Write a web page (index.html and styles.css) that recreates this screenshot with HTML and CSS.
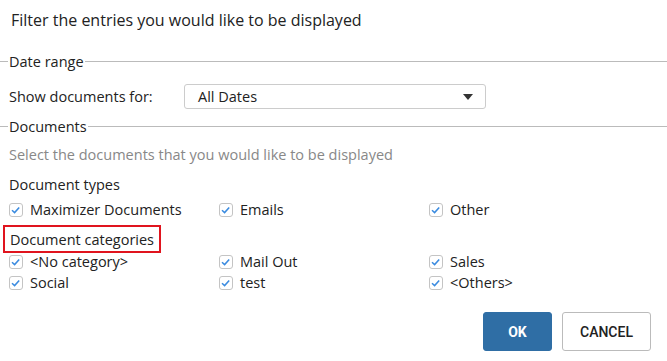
FILE: index.html
```html
<!doctype html>
<html lang="en">
  <head>
    <meta charset="UTF-8" />
    <title>Filter entries</title>
    <link rel="stylesheet" href="styles.css">
  </head>
  <body>
    <div class="dialog">
      <div class="dialog-title">Filter the entries you would like to be displayed</div>

      <div class="section-head"><span class="lead"></span><span class="label">Date range</span><span class="rule"></span></div>
      <div class="date-row">
        <span class="field-label">Show documents for:</span>
        <div class="select">
          <span>All Dates</span>
          <span class="caret"></span>
        </div>
      </div>

      <div class="section-head"><span class="lead"></span><span class="label">Documents</span><span class="rule"></span></div>
      <div class="hint">Select the documents that you would like to be displayed</div>

      <div class="group-title">Document types</div>
      <div class="check-grid">
        <label class="check"><span class="box"><svg viewBox="0 0 12 12"><path d="M2 6.2 L4.6 8.6 L9.2 3.4" /></svg></span>Maximizer Documents</label>
        <label class="check"><span class="box"><svg viewBox="0 0 12 12"><path d="M2 6.2 L4.6 8.6 L9.2 3.4" /></svg></span>Emails</label>
        <label class="check"><span class="box"><svg viewBox="0 0 12 12"><path d="M2 6.2 L4.6 8.6 L9.2 3.4" /></svg></span>Other</label>
      </div>

      <div class="group-title highlight">Document categories</div>
      <div class="check-grid tight">
        <label class="check"><span class="box"><svg viewBox="0 0 12 12"><path d="M2 6.2 L4.6 8.6 L9.2 3.4" /></svg></span>&lt;No category&gt;</label>
        <label class="check"><span class="box"><svg viewBox="0 0 12 12"><path d="M2 6.2 L4.6 8.6 L9.2 3.4" /></svg></span>Mail Out</label>
        <label class="check"><span class="box"><svg viewBox="0 0 12 12"><path d="M2 6.2 L4.6 8.6 L9.2 3.4" /></svg></span>Sales</label>
        <label class="check"><span class="box"><svg viewBox="0 0 12 12"><path d="M2 6.2 L4.6 8.6 L9.2 3.4" /></svg></span>Social</label>
        <label class="check"><span class="box"><svg viewBox="0 0 12 12"><path d="M2 6.2 L4.6 8.6 L9.2 3.4" /></svg></span>test</label>
        <label class="check"><span class="box"><svg viewBox="0 0 12 12"><path d="M2 6.2 L4.6 8.6 L9.2 3.4" /></svg></span>&lt;Others&gt;</label>
      </div>

      <div class="actions">
        <button class="btn primary">OK</button>
        <button class="btn cancel">CANCEL</button>
      </div>
    </div>
  </body>
</html>
```

FILE: styles.css
```css
* {
  margin: 0;
  padding: 0;
  box-sizing: border-box;
}
body {
  background: #fff;
  font-family: "Open Sans", sans-serif;
  color: #222;
  font-size: 14.5px;
}
.dialog {
  width: 667px;
  height: 361px;
  overflow: hidden;
}
.dialog-title {
  font-size: 16px;
  padding: 9px 11px 0;
  height: 50px;
}
.section-head {
  display: flex;
  align-items: center;
  height: 22px;
}
.section-head .lead {
  width: 8px;
  border-top: 1px solid #bbb;
}
.section-head .label {
  padding: 0 1px;
}
.section-head .rule {
  flex: 1;
  border-top: 1px solid #bbb;
}
.date-row {
  display: flex;
  align-items: center;
  height: 43px;
  padding: 6px 0 0 9px;
}
.field-label {
  width: 175px;
}
.select {
  width: 302px;
  height: 25px;
  border: 1px solid #ccc;
  border-radius: 3px;
  display: flex;
  align-items: center;
  justify-content: space-between;
  padding: 0 12px 0 13px;
}
.caret {
  width: 0;
  height: 0;
  border-left: 5px solid transparent;
  border-right: 5px solid transparent;
  border-top: 6px solid #333;
}
.hint {
  color: #888;
  padding: 8px 9px 0;
  height: 38px;
  line-height: 20px;
}
.group-title {
  padding: 0 9px;
  height: 24px;
  line-height: 20px;
}
.group-title.highlight {
  display: inline-block;
  margin: 5px 0 0 3px;
  padding: 0 5px;
  height: 28px;
  line-height: 25px;
  border: 2px solid #e0141e;
}
.check-grid {
  display: grid;
  grid-template-columns: 210px 210px 1fr;
  padding-left: 9px;
}
.check-grid.tight {
  margin-top: -2px;
}
.check {
  display: flex;
  align-items: center;
  height: 21px;
  gap: 7px;
}
.box {
  width: 14px;
  height: 14px;
  border: 1px solid #c4c4c4;
  border-radius: 3px;
  display: flex;
}
.box svg {
  width: 12px;
  height: 12px;
  fill: none;
  stroke: #3a8be0;
  stroke-width: 1.5;
}
.actions {
  display: flex;
  justify-content: flex-end;
  gap: 10px;
  padding: 19px 16px 0 0;
}
.btn {
  height: 39px;
  border: 1px solid #bbb;
  border-radius: 3px;
  background: #fff;
  font-family: Roboto, sans-serif;
  font-size: 14px;
  font-weight: 500;
  color: #222;
}
.btn.primary {
  width: 69px;
  background: #2f6ea5;
  border-color: #2f6ea5;
  color: #fff;
  font-weight: 700;
}
.btn.cancel {
  width: 89px;
}
```
